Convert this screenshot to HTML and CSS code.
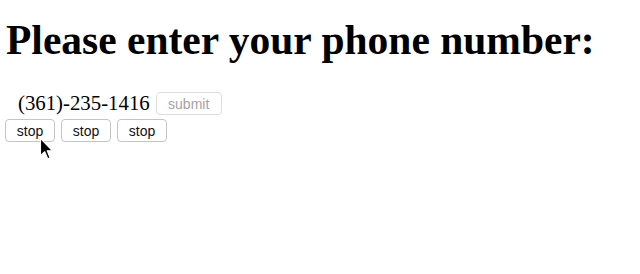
FILE: index.html
```html
<!DOCTYPE html>
<html lang="en">
<head>
    <meta charset="UTF-8">
    <meta name="viewport" content="width=device-width, initial-scale=1.0">
    <title>Phone Number</title>
    <link rel="stylesheet" href="styles.css">
</head>
<body>
    <h1>Please enter your phone number:</h1>

    <!-- Number entry row -->
    <div class="phone-row">
        <span class="phone-number">(361)-235-1416</span>
        <button class="submit-btn" disabled>submit</button>
    </div>

    <!-- Stop buttons -->
    <div class="stop-row">
        <button class="stop-btn">stop</button>
        <button class="stop-btn">stop</button>
        <button class="stop-btn">stop</button>
    </div>

    <!-- Mouse pointer from the capture -->
    <svg class="pointer" width="15" height="23" viewBox="0 0 12 19">
        <path d="M1 1 L1 15.5 L4.5 12.2 L7 18 L9 17.2 L6.6 11.4 L11 11.4 Z" fill="#000" stroke="#fff" stroke-width="1" stroke-linejoin="round"/>
    </svg>
</body>
</html>
```

FILE: styles.css
```css
* {
    box-sizing: border-box;
}
body {
    margin: 0;
    padding: 0 6px;
    background: #fff;
    color: #000;
    font-family: "Liberation Serif", "Times New Roman", serif;
    position: relative;
    height: 274px;
    overflow: hidden;
}
h1 {
    margin: 16px 0 0;
    font-size: 41.5px;
    font-weight: bold;
    line-height: 48px;
}
.phone-row {
    display: flex;
    align-items: flex-start;
    margin-top: 26px;
}
.phone-number {
    padding-left: 12px;
    font-size: 20.8px;
    line-height: 26px;
}
button {
    height: 23px;
    padding: 0;
    background: #fff;
    border: 1px solid #c4c4c4;
    border-radius: 4px;
    font-family: "Liberation Sans", Arial, sans-serif;
    font-size: 14px;
    color: #111;
}
.submit-btn {
    width: 66px;
    margin: 2px 0 0 6px;
    border-color: #dedede;
    color: #a3a3a3;
}
.stop-row {
    display: flex;
    gap: 6px;
    margin-top: 3px;
    margin-left: -1px;
}
.stop-btn {
    width: 50px;
}
.pointer {
    position: absolute;
    left: 39px;
    top: 137px;
}
```
